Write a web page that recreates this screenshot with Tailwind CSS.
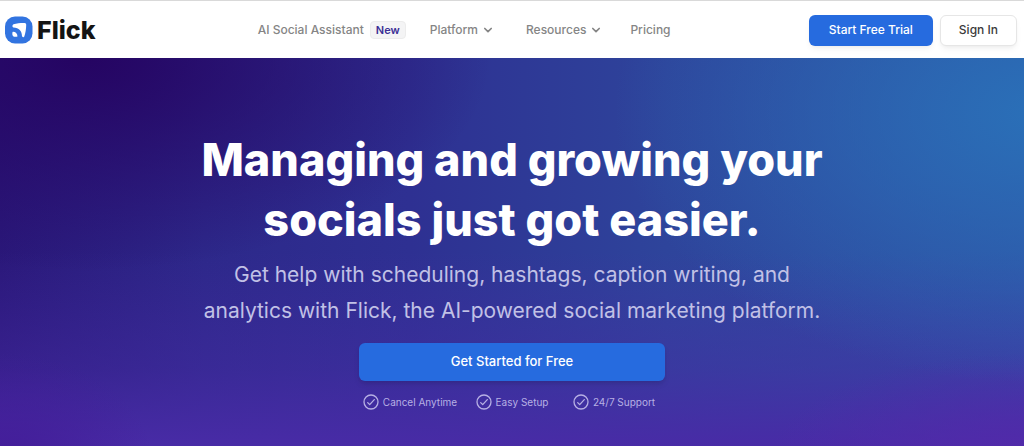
<!DOCTYPE html>
<html lang="en">
<head>
    <meta charset="UTF-8">
    <meta name="viewport" content="width=device-width, initial-scale=1.0">
    <title>Flick</title>
    <script src="https://cdn.jsdelivr.net/npm/@tailwindcss/browser@4"></script>
    <style>
        .hero-bg {
            background:
                radial-gradient(ellipse 42% 70% at 102% 14%, #2a70b8 0%, rgb(42 112 184 / 0.6) 40%, rgb(42 112 184 / 0) 100%),
                radial-gradient(ellipse 40% 55% at 8% 0%, #250462 0%, rgb(37 4 98 / 0.6) 40%, rgb(37 4 98 / 0) 100%),
                radial-gradient(ellipse 25% 28% at 100% 104%, #522aaa 0%, rgb(82 42 170 / 0) 100%),
                radial-gradient(ellipse 15% 28% at 0% 104%, #431c98 0%, rgb(67 28 152 / 0) 100%),
                linear-gradient(0deg, #482ba6 0%, rgb(72 43 166 / 0.45) 20%, rgb(72 43 166 / 0) 50%),
                linear-gradient(90deg, #2a187a 0%, #2d288a 20%, #2e3092 40%, #2e449b 65%, #2f50a4 100%);
        }
    </style>
</head>
<body class="flex min-h-screen flex-col bg-white font-['Inter',sans-serif]">
    <header class="flex items-center justify-between border-t border-[#d9d9d9] pt-[13px] pr-[7px] pb-3 pl-[5px]">
        <a href="#" class="flex items-center gap-1 text-[#141414]">
            <svg class="size-7" viewBox="0 0 28 28" aria-hidden="true">
                <rect x="0" y="0.5" width="27.500" height="27" rx="10" fill="#3274e0"/>
                <path d="M8.500 8.200C12 7.200 16 6.900 19.600 7C20.700 7.100 21.300 7.800 21.200 9C21.100 13 20.500 17 19.300 20.400C18.900 21.300 18.200 21.300 17.700 20.900L17 20.200C17 15 14 11.600 8.400 11.400C7.100 11.200 7.100 8.700 8.500 8.200Z" fill="#fff"/>
                <path d="M7.600 15.900C10.300 15.600 12.400 17.500 12.500 20.400C10.800 21.200 8.700 21 7.800 19.700C7.200 18.600 7.200 16.900 7.600 15.900Z" fill="#fff"/>
            </svg>
            <span class="text-[25px] leading-8 font-extrabold">Flick</span>
        </a>

        <nav class="flex items-center pl-6 text-xs leading-5 font-medium text-[#858585]">
            <a href="#" class="flex items-center gap-[6px]">
                AI Social Assistant
                <span class="rounded border border-[#ececec] bg-[#f4f4f5] px-[5px] text-[11px] leading-4 font-semibold text-[#3c2f96]">New</span>
            </a>
            <button type="button" class="ml-6 flex items-center gap-1">
                Platform
                <svg class="size-3" viewBox="0 0 12 12" fill="none" stroke="currentColor" stroke-width="1.700" stroke-linecap="round" stroke-linejoin="round" aria-hidden="true"><path d="M2.800 4.500l3.200 3.200 3.200-3.200"/></svg>
            </button>
            <button type="button" class="ml-8 flex items-center gap-1">
                Resources
                <svg class="size-3" viewBox="0 0 12 12" fill="none" stroke="currentColor" stroke-width="1.700" stroke-linecap="round" stroke-linejoin="round" aria-hidden="true"><path d="M2.800 4.500l3.200 3.200 3.200-3.200"/></svg>
            </button>
            <a href="#" class="ml-7">Pricing</a>
        </nav>

        <div class="flex gap-[7px] text-xs font-medium">
            <button type="button" class="h-[31px] rounded-md bg-[#266bdf] px-5 text-white shadow-md shadow-black/5">Start Free Trial</button>
            <button type="button" class="h-[31px] rounded-md border border-[#e6e6e6] bg-white px-[18px] text-[#3b3b3b] shadow-md shadow-black/5">Sign In</button>
        </div>
    </header>

    <main class="hero-bg flex grow flex-col items-center px-4 pt-[72px] pb-8 text-center">
        <h1 class="max-w-[700px] text-[45px] leading-[60px] font-extrabold text-white">Managing and growing your socials just got easier.</h1>
        <p class="mt-[7px] max-w-[640px] text-[21px] leading-9 text-[#c1c1e6]">Get help with scheduling, hashtags, caption writing, and analytics with Flick, the AI-powered social marketing platform.</p>
        <button type="button" class="mt-[14px] h-[38px] w-full max-w-[306px] rounded-md bg-[#266bdf] text-[13px] font-medium text-white shadow-md shadow-black/10">Get Started for Free</button>
        <ul class="mt-3 grid w-full max-w-[306px] grid-cols-3 text-[10px] leading-[18px] text-[#b7b0e4]">
            <li class="flex items-center justify-center gap-1">
                <svg class="size-4" viewBox="0 0 16 16" fill="none" stroke="currentColor" stroke-width="1.300" stroke-linecap="round" stroke-linejoin="round" aria-hidden="true"><circle cx="8" cy="8" r="7"/><path d="M4.700 8.600l2 2 4.600-5"/></svg>
                Cancel Anytime
            </li>
            <li class="flex items-center justify-center gap-1">
                <svg class="size-4" viewBox="0 0 16 16" fill="none" stroke="currentColor" stroke-width="1.300" stroke-linecap="round" stroke-linejoin="round" aria-hidden="true"><circle cx="8" cy="8" r="7"/><path d="M4.700 8.600l2 2 4.600-5"/></svg>
                Easy Setup
            </li>
            <li class="flex items-center justify-center gap-1">
                <svg class="size-4" viewBox="0 0 16 16" fill="none" stroke="currentColor" stroke-width="1.300" stroke-linecap="round" stroke-linejoin="round" aria-hidden="true"><circle cx="8" cy="8" r="7"/><path d="M4.700 8.600l2 2 4.600-5"/></svg>
                24/7 Support
            </li>
        </ul>
    </main>
</body>
</html>
